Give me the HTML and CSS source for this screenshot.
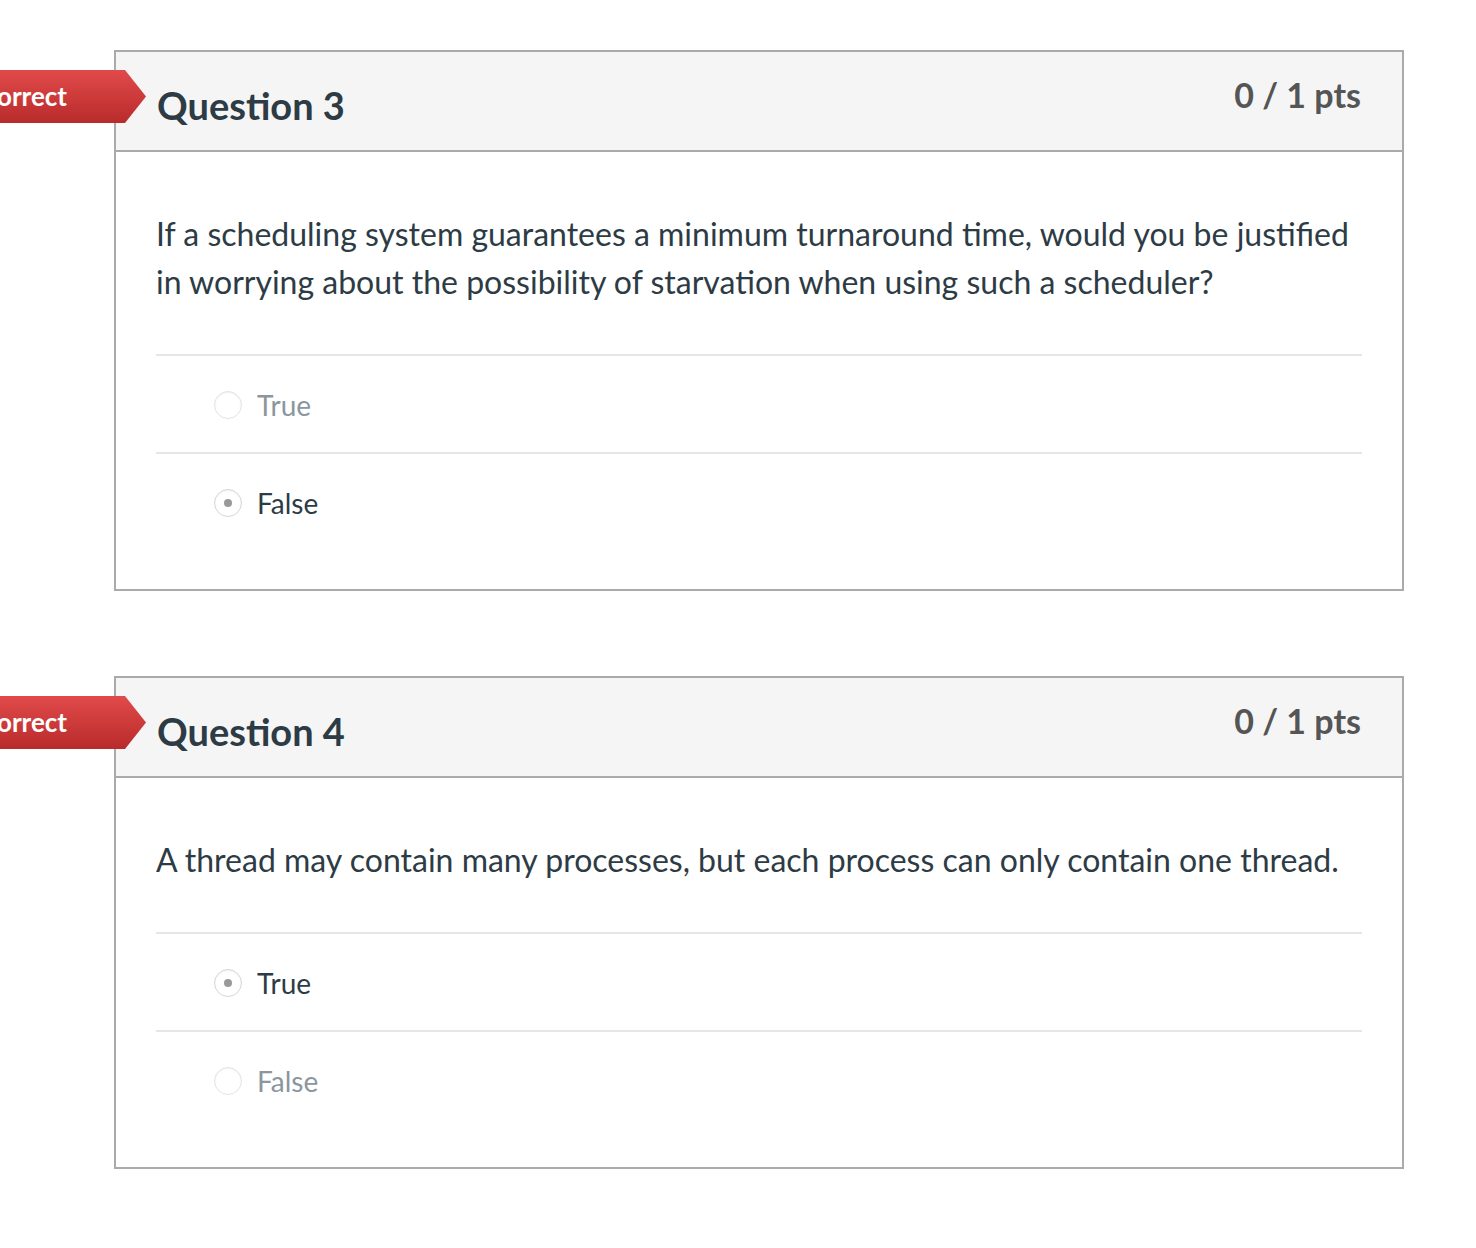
FILE: index.html
```html
<!DOCTYPE html>
<html>
<head>
<meta charset="utf-8">
<link rel="stylesheet" href="styles.css">
</head>
<body>
<div class="page">
  <div class="question">
    <div class="badge">Incorrect</div>
    <div class="q-header">
      <h2 class="q-title">Question 3</h2>
      <div class="q-pts">0 / 1 pts</div>
    </div>
    <div class="q-body">
      <p class="q-text">If a scheduling system guarantees a minimum turnaround time, would you be justified in worrying about the possibility of starvation when using such a scheduler?</p>
      <div class="answers">
        <div class="answer">
          <span class="radio"></span><span class="label muted">True</span>
        </div>
        <div class="answer">
          <span class="radio checked"></span><span class="label">False</span>
        </div>
      </div>
    </div>
  </div>

  <div class="question">
    <div class="badge">Incorrect</div>
    <div class="q-header">
      <h2 class="q-title">Question 4</h2>
      <div class="q-pts">0 / 1 pts</div>
    </div>
    <div class="q-body">
      <p class="q-text">A thread may contain many processes, but each process can only contain one thread.</p>
      <div class="answers">
        <div class="answer">
          <span class="radio checked"></span><span class="label">True</span>
        </div>
        <div class="answer">
          <span class="radio"></span><span class="label muted">False</span>
        </div>
      </div>
    </div>
  </div>
</div>
</body>
</html>
```

FILE: styles.css
```css
html, body {
  margin: 0;
  padding: 0;
  background: #ffffff;
}
body {
  font-family: Lato, "Open Sans", "Liberation Sans", sans-serif;
  color: #2d3b45;
  overflow: hidden;
}
.page {
  padding: 50px 72px 0 114px;
  display: flex;
  flex-direction: column;
  gap: 85px;
}
.question {
  position: relative;
  width: 1290px;
  box-sizing: border-box;
  border: 2px solid #aaaaaa;
}
.badge {
  position: absolute;
  top: 18px;
  right: 1256px;
  width: 260px;
  height: 53px;
  box-sizing: border-box;
  padding-right: 79px;
  text-align: right;
  white-space: nowrap;
  line-height: 53px;
  font-size: 26px;
  font-weight: 700;
  color: #ffffff;
  background: linear-gradient(#e14a4a, #b92b2b);
  clip-path: polygon(0 0, calc(100% - 21px) 0, 100% 50%, calc(100% - 21px) 100%, 0 100%);
}
.q-header {
  display: flex;
  justify-content: space-between;
  align-items: flex-start;
  height: 100px;
  box-sizing: border-box;
  background: #f5f5f5;
  border-bottom: 2px solid #aaaaaa;
  padding: 0 41px;
}
.q-title {
  margin: 0;
  padding-top: 29px;
  font-size: 38px;
  font-weight: 700;
  line-height: 48px;
  color: #2d3b45;
}
.q-pts {
  padding-top: 21px;
  font-size: 34px;
  font-weight: 700;
  line-height: 44px;
  color: #555555;
}
.q-body {
  padding: 58px 40px 39px 40px;
}
.q-text {
  margin: 0 0 48px 0;
  font-size: 32px;
  line-height: 48px;
  color: #2d3b45;
}
.answers {
  display: flex;
  flex-direction: column;
}
.answer {
  height: 98px;
  box-sizing: border-box;
  display: flex;
  align-items: center;
  padding-left: 58px;
  padding-top: 2px;
  border-top: 2px solid #e6e6e6;
}
.radio {
  width: 28px;
  height: 28px;
  box-sizing: border-box;
  border-radius: 50%;
  border: 1.5px solid #e3e3e3;
  box-shadow: inset 0 1px 2px rgba(0,0,0,0.06);
  background: #ffffff;
  display: flex;
  align-items: center;
  justify-content: center;
  margin-right: 15px;
}
.radio.checked {
  border-color: #d6d6d6;
}
.radio.checked::after {
  content: "";
  width: 8px;
  height: 8px;
  border-radius: 50%;
  background: #999999;
}
.label {
  font-size: 28px;
  line-height: 40px;
  color: #2d3b45;
}
.label.muted {
  color: #8b969e;
}
```
